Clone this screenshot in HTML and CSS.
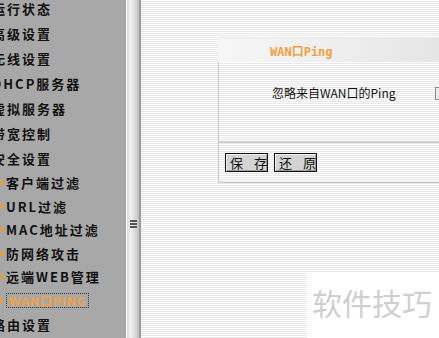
FILE: index.html
```html
<!DOCTYPE html>
<html lang="zh-CN">
<head>
  <meta charset="UTF-8" />
  <title>WAN口Ping</title>
  <link rel="stylesheet" href="styles.css">
</head>
<body>
  <div class="frame">
    <div class="menu">
      <div class="item">运行状态</div>
      <div class="item">高级设置</div>
      <div class="item">无线设置</div>
      <div class="item">DHCP服务器</div>
      <div class="item">虚拟服务器</div>
      <div class="item">带宽控制</div>
      <div class="item">安全设置</div>
      <div class="sub"><span class="dot"></span>客户端过滤</div>
      <div class="sub"><span class="dot"></span>URL过滤</div>
      <div class="sub"><span class="dot"></span>MAC地址过滤</div>
      <div class="sub"><span class="dot"></span>防网络攻击</div>
      <div class="sub"><span class="dot"></span>远端WEB管理</div>
      <div class="sub"><span class="dot"></span><span class="current">WAN口PING</span></div>
      <div class="item">路由设置</div>
    </div>

    <div class="splitter">
      <div class="grip"><span></span><span></span><span></span></div>
    </div>

    <div class="main">
      <div class="panel">
        <div class="panel-head">WAN口Ping</div>
        <div class="panel-body">
          <div class="field">
            <span class="label">忽略来自WAN口的Ping</span>
            <span class="check"></span>
          </div>
          <div class="actions">
            <button class="btn">保 存</button>
            <button class="btn">还 原</button>
          </div>
        </div>
      </div>
      <div class="watermark">软件技巧</div>
    </div>
  </div>
</body>
</html>
```

FILE: styles.css
```css
body {
  margin: 0;
  overflow: hidden;
  font-family: "Noto Sans CJK SC", "DejaVu Sans", sans-serif;
}
.frame {
  display: flex;
  height: 338px;
}
.menu {
  width: 126px;
  flex: none;
  background: #a8a8a8;
  overflow: hidden;
}
.item, .sub {
  display: flex;
  align-items: center;
  white-space: nowrap;
  font-size: 13px;
  font-weight: bold;
  letter-spacing: 2px;
  color: #111;
}
.item {
  height: 25px;
  margin-left: -8px;
}
.item:first-child {
  margin-top: -4px;
}
.sub {
  height: 23.5px;
}
.sub:first-of-type {
  margin-top: 1px;
}
.dot {
  width: 3px;
  height: 5px;
  border-radius: 0 3px 3px 0;
  background: #f59a2c;
  margin-right: 3px;
}
.current {
  color: #f5a040;
  border: 1px dotted #333;
  padding: 0 2px;
  line-height: 13px;
  font-size: 12px;
  letter-spacing: 1px;
}
.item:last-child {
  height: 24px;
}
.splitter {
  width: 15px;
  flex: none;
  box-sizing: border-box;
  border-left: 1px solid #fafafa;
  border-right: 2px solid #9c9c9c;
  background: linear-gradient(to right, #dadada, #f2f2f2 30%, #d2d2d2 80%, #bdbdbd);
  padding-top: 220px;
  display: flex;
  flex-direction: column;
  align-items: center;
}
.grip {
  width: 7px;
  display: flex;
  flex-direction: column;
  gap: 1px;
  margin-left: 1px;
}
.grip span {
  height: 2px;
  background: #555;
}
.main {
  position: relative;
  flex: 1;
  background: repeating-linear-gradient(#ffffff 0 1px, #e8e8e8 1px 2px);
  padding: 38px 0 0 77px;
  overflow: hidden;
}
.panel {
  width: 300px;
}
.panel-head {
  height: 24px;
  box-sizing: border-box;
  padding-left: 52px;
  display: flex;
  align-items: center;
  background: linear-gradient(to right, #f6f6f6, #eeeeee 40%, #dedede);
  color: #f0a040;
  font-family: "DejaVu Sans Mono", "Noto Sans CJK SC", monospace;
  font-size: 12px;
  font-weight: bold;
}
.panel-body {
  border-left: 1px solid #c8c8c8;
  border-bottom: 1px solid #c8c8c8;
}
.field {
  height: 81px;
  box-sizing: border-box;
  padding: 24px 0 0 53px;
  display: flex;
  align-items: flex-start;
  border-bottom: 2px solid #d0d0d0;
}
.label {
  font-size: 12px;
  line-height: 14px;
  color: #111;
  width: 163px;
}
.check {
  width: 11px;
  height: 11px;
  border: 1px solid #888;
  background: #ececec;
  margin-top: 1px;
}
.actions {
  display: flex;
  gap: 6px;
  padding: 10px 0 10px 6px;
}
.btn {
  width: 43px;
  height: 19px;
  padding: 0 0 0 4px;
  border: 1px solid #111;
  background: #d4d4d4;
  box-shadow: inset 1px 1px #f4f4f4, inset -1px -1px #999;
  font-family: "Noto Sans CJK SC", sans-serif;
  font-size: 13px;
  line-height: 17px;
  letter-spacing: 4px;
  white-space: pre;
  color: #111;
}
.watermark {
  position: absolute;
  left: 166px;
  top: 273px;
  width: 140px;
  height: 70px;
  background: #ffffff;
  padding: 12px 0 0 5px;
  box-sizing: border-box;
  color: #cfcfcf;
  font-size: 30px;
  line-height: 34px;
  white-space: nowrap;
}
```
